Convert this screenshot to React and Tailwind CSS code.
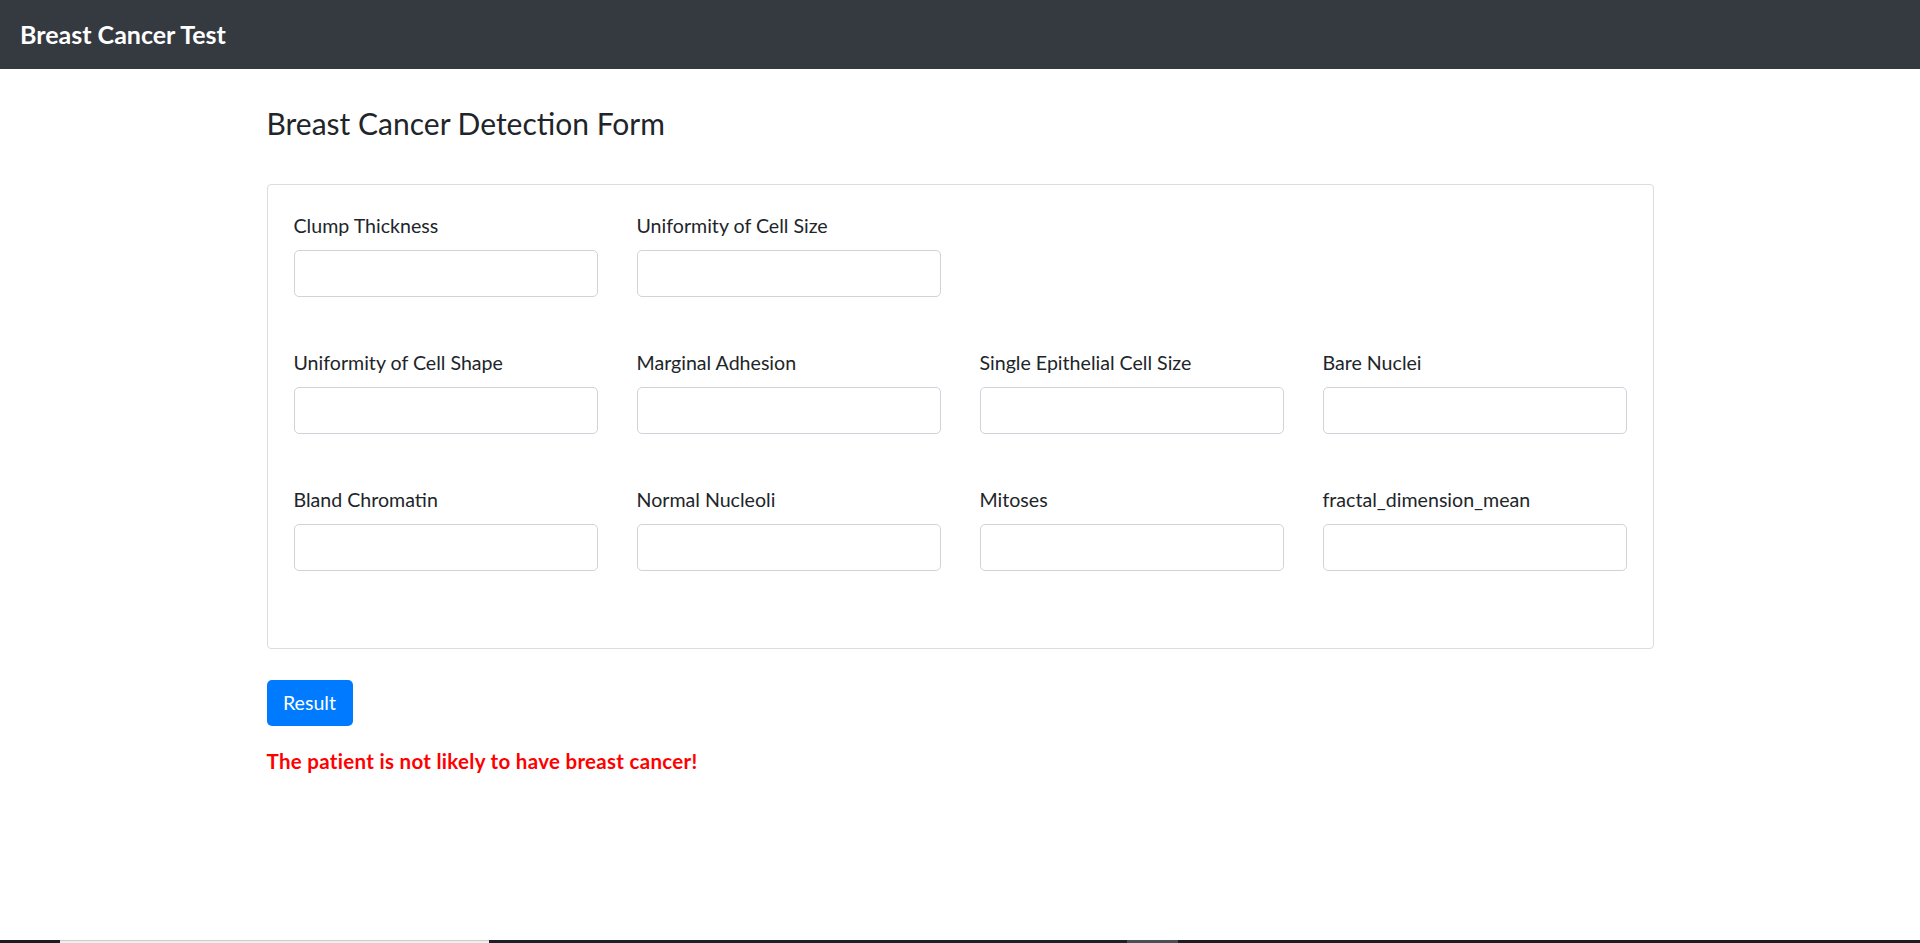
// Breast Cancer Test - detection form
import { useState } from 'react';

const rows = [
  ['Clump Thickness', 'Uniformity of Cell Size'],
  ['Uniformity of Cell Shape', 'Marginal Adhesion', 'Single Epithelial Cell Size', 'Bare Nuclei'],
  ['Bland Chromatin', 'Normal Nucleoli', 'Mitoses', 'fractal_dimension_mean'],
];

export default function App() {
  const [values, setValues] = useState({});

  return (
    <div className="min-h-screen flex flex-col bg-white text-[#212529] font-['Segoe_UI','Lato','Liberation_Sans',sans-serif]">
      {/* Navbar */}
      <nav className="h-[69px] bg-[#343a40] flex items-center px-[20px]">
        <span className="text-white text-[25px] font-bold">Breast Cancer Test</span>
      </nav>

      {/* Content */}
      <main className="flex-1 w-[1387px] mx-auto">
        <h4 className="mt-[36px] text-[30px] leading-[1.2] font-normal">Breast Cancer Detection Form</h4>

        <div className="mt-[43px] border border-[#dcdcdc] rounded-[4px] pt-[26px] pb-[77px] px-[26px] flex flex-col gap-[51px]">
          {rows.map((row, i) => (
            <div key={i} className="grid grid-cols-4 gap-x-[39px]">
              {row.map((label) => (
                <div key={label} className="flex flex-col">
                  <label className="text-[19.6px] leading-[29px] mb-[10px]">{label}</label>
                  <input
                    type="text"
                    value={values[label] || ''}
                    onChange={(e) => setValues({ ...values, [label]: e.target.value })}
                    className="h-[47px] border border-[#ced4da] rounded-[5px] px-3 text-[19.6px] outline-none"
                  />
                </div>
              ))}
            </div>
          ))}
        </div>

        <button className="mt-[31px] h-[46px] w-[86px] bg-[#007bff] text-white text-[19.6px] rounded-[5px]">
          Result
        </button>

        <p className="mt-[20px] text-[20.5px] tracking-[0.3px] font-bold text-[#ff0000]">The patient is not likely to have breast cancer!</p>
      </main>

      {/* taskbar edge */}
      <div className="h-[3px] flex">
        <div className="w-[60px] bg-[#1c1c1e]" />
        <div className="w-[429px] bg-[#eeeeee] border-t border-[#cccccc]" />
        <div className="w-[638px] bg-[#1c2128]" />
        <div className="w-[51px] bg-[#4a4f55]" />
        <div className="flex-1 bg-[#1c1d20]" />
      </div>
    </div>
  );
}
